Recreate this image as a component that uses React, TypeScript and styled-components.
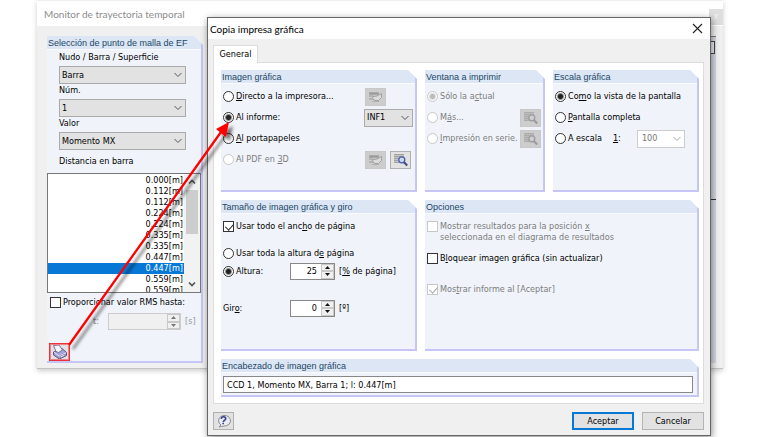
import React from "react";
import styled, { createGlobalStyle, css } from "styled-components";

const Global = createGlobalStyle`
  * { box-sizing: border-box; }
  body { margin: 0; background: #fff; overflow: hidden; }
  body, input, button, select { font: 9px/11px "DejaVu Sans Condensed", "DejaVu Sans", sans-serif; color: #000; }
  button, input, select { margin: 0; padding: 0; }
  u { text-underline-offset: 1px; }
`;

/* ---------- shells ---------- */
const Desktop = styled.main`
  position: relative;
  min-height: 100vh;
  padding: 0 37px;
`;
const MonitorWindow = styled.section`
  background: #f0f0f0;
  border-top: 1px solid #f0f0f0;
  border-bottom: 1px solid #c4c4c4;
  box-shadow: 0 2px 5px rgba(0, 0, 0, 0.2);
`;
const MonitorTitle = styled.header`
  display: flex;
  justify-content: space-between;
  align-items: center;
  height: 25px;
  padding-left: 7px;
  background: #fff;
  color: #8c8c8c;
  font: 10px/16px Lato, sans-serif;
`;
const MonitorClose = styled.button`
  width: 14px;
  height: 16px;
  margin-top: 6px;
  border: 0;
  background: #dedede;
  color: #f4f4f4;
`;
const MonitorBody = styled.div`
  display: flex;
  gap: 8px;
  padding: 10px 7px 5px 10px;
`;
const PlotArea = styled.div`
  flex: 1;
  display: flex;
  flex-direction: column;
  align-items: flex-end;
  background: #d5dae2;
  border-top: 1px solid #777;
`;
const PlotBox = styled.div`
  width: 60px;
  height: 13px;
  margin: 4px 1px 0 0;
  border: 1px solid #444;
  background: #e8ebf0;
`;
const PlotAxis = styled.div`
  width: 100%;
  margin-top: 145px;
  border-top: 1px solid #333;
`;
const Dialog = styled.section`
  position: absolute;
  top: 17px;
  left: 207px;
  right: 49px;
  background: #f0f0f0;
  border: 1px solid #666;
  box-shadow: 1px 2px 7px rgba(0, 0, 0, 0.45);
`;
const DialogTitle = styled.header`
  display: flex;
  justify-content: space-between;
  align-items: center;
  height: 21px;
  padding: 0 7px 0 2px;
  background: #fff;
`;
const DialogName = styled.h1`
  margin: 0;
  font: 10px/18px Lato, sans-serif;
`;
const CloseButton = styled.button`
  width: 11px;
  height: 11px;
  border: 0;
  background: none;
  svg { display: block; }
`;
const DialogBody = styled.div`
  padding: 6px 6px 5px 5px;
`;
const Tab = styled.button`
  display: block;
  position: relative;
  height: 18px;
  width: 45px;
  margin-bottom: -1px;
  background: #fff;
  border: 1px solid #dcdcdc;
  border-bottom: 0;
`;
const TabPanel = styled.div`
  display: grid;
  grid-template-columns: 196fr 120fr 146fr;
  gap: 8px;
  padding: 7px 4px 6px 7px;
  background: #fff;
  border: 1px solid #dcdcdc;
`;
const Footer = styled.footer`
  display: flex;
  align-items: center;
  gap: 8px;
  padding-top: 8px;
`;

/* ---------- groups ---------- */
const GroupBox = styled.section<{ $span?: number; $height?: number }>`
  grid-column: span ${(p) => p.$span ?? 1};
  min-width: 0;
  min-height: ${(p) => p.$height ?? 0}px;
  background: #f0f4fa;
  border: solid #c5c5f6;
  border-width: 0 2px 2px 0;
  clip-path: polygon(0 0, calc(100% - 9px) 0, 100% 9px, 100% 100%, 0 100%);
`;
const GroupTitle = styled.h2`
  margin: 0;
  height: 14px;
  padding-left: 1px;
  background: #dce6f5;
  border-bottom: 1px solid #f8faff;
  color: #1c4666;
  font: 9px/14px "Liberation Sans", sans-serif;
  white-space: nowrap;
`;
const GroupBody = styled.div`
  padding: 2px 2px 0;
`;
const Row = styled.div<{ $h?: number; $top?: number; $left?: number }>`
  display: flex;
  align-items: center;
  height: ${(p) => p.$h ?? 21}px;
  margin-top: ${(p) => p.$top ?? 0}px;
  padding-left: ${(p) => p.$left ?? 0}px;
`;
const Actions = styled.div`
  display: flex;
  gap: 4px;
  margin-left: auto;
`;
const ImageActions = styled(Actions)`
  width: 49px;
  padding-left: 1px;
`;

/* ---------- controls ---------- */
const Choice = styled.label<{ $off?: boolean }>`
  display: flex;
  align-items: flex-start;
  gap: 2px;
  color: ${(p) => (p.$off ? "#7c7c7c" : "#000")};
  white-space: nowrap;
`;
const mark = css`
  appearance: none;
  flex: none;
  width: 11px;
  height: 11px;
  border: 1px solid #333;
  background: #fff;
  &:disabled { border-color: #c8c8c8; }
`;
const Radio = styled.input.attrs({ type: "radio" })`
  ${mark}
  border-radius: 50%;
  &:checked { background: radial-gradient(circle, #222 0 2px, #fff 4px); }
  &:checked:disabled { background: radial-gradient(circle, #bbb 0 2px, #fff 4px); }
`;
const Check = styled.input.attrs({ type: "checkbox" })`
  ${mark}
  &:checked::before {
    content: "";
    display: block;
    width: 4px;
    height: 7px;
    margin: 0 0 0 3px;
    border: solid #333;
    border-width: 0 1px 1px 0;
    transform: rotate(42deg);
  }
  &:checked:disabled::before { border-color: #aaa; }
`;
const FieldLabel = styled.label<{ $w?: number; $off?: boolean }>`
  width: ${(p) => (p.$w ? p.$w + "px" : "auto")};
  color: ${(p) => (p.$off ? "#858585" : "#000")};
`;
const SelectWrap = styled.span<{ $w?: number }>`
  display: grid;
  align-items: center;
  width: ${(p) => (p.$w ? p.$w + "px" : "100%")};
  & > * { grid-area: 1 / 1; }
  & > svg { justify-self: end; margin-right: 4px; pointer-events: none; }
`;
const Select = styled.select`
  appearance: none;
  width: 100%;
  height: 18px;
  padding-left: 2px;
  border: 1px solid #aaa;
  border-radius: 0;
  background: #e2e2e2;
  &:disabled { background: #fff; color: #777; border-color: #ccc; opacity: 1; padding-left: 4px; }
`;
const SpinBox = styled.span<{ $w?: number; $off?: boolean }>`
  display: flex;
  width: ${(p) => p.$w ?? 45}px;
  height: 17px;
  border: 1px solid ${(p) => (p.$off ? "#ccc" : "#888")};
  background: ${(p) => (p.$off ? "#f0f0f0" : "#fff")};
  input { flex: 1; min-width: 0; border: 0; background: none; text-align: right; padding-right: 4px; }
`;
const SpinButtons = styled.span`
  display: flex;
  flex-direction: column;
  width: 13px;
  button { display: flex; flex: 1; align-items: center; justify-content: center; border: 1px solid #c8c8c8; background: #f0f0f0; }
`;
const Unit = styled.span<{ $off?: boolean }>`
  padding-left: 4px;
  color: ${(p) => (p.$off ? "#999" : "#000")};
`;
const IconButton = styled.button<{ $dim?: boolean }>`
  display: flex;
  align-items: center;
  justify-content: center;
  flex: none;
  width: 21px;
  height: 18px;
  border: 1px solid ${(p) => (p.$dim ? "#c8c8c8" : "#b0b0b0")};
  background: ${(p) => (p.$dim ? "#cdcdcd" : "#e2e2e2")};
`;
const PrintButton = styled(IconButton)`
  border: 1px solid #ee3038;
  outline: 1px solid #f08088;
  outline-offset: -2px;
  margin-top: 17px;
`;
const PushButton = styled.button<{ $main?: boolean }>`
  width: 62px;
  height: 18px;
  border: ${(p) => (p.$main ? "2px solid #0878d7" : "1px solid #b4b4b4")};
  background: #e2e2e2;
`;
const HelpButton = styled(IconButton)`
  margin-right: auto;
`;
const TextField = styled.input`
  display: block;
  width: 100%;
  height: 17px;
  padding-left: 3px;
  border: 1px solid #888;
  background: #fff;
`;
const Wide = styled.div`
  padding: 1px 2px 2px 0;
`;

/* ---------- monitor side panel ---------- */
const SideGroup = styled(GroupBox)`
  width: 156px;
  flex: none;
`;
const SideFields = styled.div`
  display: grid;
  width: 139px;
  padding: 1px 0 0 12px;
`;
const SideLabel = styled.label`
  height: 15px;
  line-height: 13px;
  white-space: nowrap;
`;
const ListFrame = styled.div`
  display: flex;
  height: 120px;
  border: 1px solid #777;
  background: #fff;
`;
const List = styled.ul`
  flex: 1;
  margin: 0;
  padding: 1px 0 0;
  list-style: none;
  overflow: hidden;
`;
const Item = styled.li<{ $on?: boolean }>`
  height: 11px;
  padding-right: 1px;
  text-align: right;
  color: ${(p) => (p.$on ? "#fff" : "#000")};
  background: ${(p) => (p.$on ? "#0878d7" : "none")};
`;
const Scroll = styled.div`
  display: flex;
  flex-direction: column;
  align-items: center;
  width: 16px;
  padding: 5px 0;
  background: #f2f2f2;
`;
const Thumb = styled.div`
  width: 12px;
  height: 44px;
  margin: 5px 0 auto;
  background: #cdcdcd;
`;

const Overlay = styled.svg`
  position: absolute;
  top: 0;
  left: 0;
  pointer-events: none;
`;

/* ---------- drawings ---------- */
const Chevron = ({ up, strong, off }: { up?: boolean; strong?: boolean; off?: boolean }) => (
  <svg width="8" height="6" viewBox="0 0 8 6" fill="none" stroke={off ? "#aaa" : "#555"} strokeWidth={strong ? 1.7 : 1}>
    <path d={up ? "M1 4.5 4 1.5 7 4.5" : strong ? "M1 1.5 4 4.5 7 1.5" : "M.5 1 4 4.5 7.5 1"} />
  </svg>
);
const Triangle = ({ down, off }: { down?: boolean; off?: boolean }) => (
  <svg width="5" height="3" viewBox="0 0 5 3"><path fill={off ? "#777" : "#111"} d={down ? "M0 0h5L2.5 3z" : "M0 3h5L2.5 0z"} /></svg>
);
const SetupIcon = () => (
  <svg width="15" height="12" viewBox="0 0 15 12">
    <path d="M1 1h10v3H1z" fill="#aaa" /><path d="M2 2.5h8M1 5h4M1 8h4" stroke="#999" />
    <path d="M5 5.5 9 5l4.5-2.5v4l-3 3H7L4.5 7.5z" fill="#dcdcdc" stroke="#a0a0a0" /><path d="M4 10.5h7" stroke="#b0b0b0" />
  </svg>
);
const PreviewIcon = ({ off }: { off?: boolean }) => (
  <svg width="16" height="14" viewBox="0 0 16 14">
    <path d="M1 1h10v9H1z" fill={off ? "#bbb" : "#c5c5c9"} />
    <path d="M1 1.5h10M1 3.5h10M1 5.5h5M1 7.5h4M1 9.5h5" stroke={off ? "#a8a8a8" : "#999"} strokeWidth=".8" />
    <circle cx="8.8" cy="6.8" r="3" fill={off ? "#cfcfcf" : "#c9daf5"} stroke={off ? "#9c9c9c" : "#4a5da3"} strokeWidth="1.3" />
    <path d="M10.8 9 14.2 12.5" stroke={off ? "#9c9c9c" : "#44508e"} strokeWidth="2.2" />
  </svg>
);
const PrinterIcon = () => (
  <svg width="17" height="16" viewBox="0 0 17 16" strokeLinejoin="round">
    <path d="M2.5 8 11 4.5l4.5 4v3L8.5 15l-6-4z" fill="#a4a2d6" stroke="#4a4770" strokeWidth=".9" />
    <path d="M5 7.5 2.5 1.5 8 1l3.5 5L7.5 8.5z" fill="#f4f5ff" stroke="#6a6894" strokeWidth=".9" />
    <path d="M3 8.2 8.3 12l6.7-3.2" fill="none" stroke="#dddcf5" /><path d="M9 12.5l4-2 1.5.8-5 2.7z" fill="#fff" stroke="#666390" strokeWidth=".6" />
  </svg>
);
const HelpIcon = () => (
  <svg width="15" height="14" viewBox="0 0 15 14" fill="none">
    <path d="M3 13l2-2A6 5.3 0 1 1 8 12c-2 0-3 1-5 1z" fill="#e9ebf6" stroke="#8c8c8c" />
    <path d="M5.3 4.8C5.6 1.9 10 2.2 9.7 4.8 9.4 6.2 7.5 6.2 7.3 8" stroke="#35408a" strokeWidth="1.6" /><path d="M6.4 8.8H8v1.5H6.4z" fill="#35408a" />
  </svg>
);

/* ---------- composites ---------- */
const Group = ({ title, span, height, children }: { title: string; span?: number; height?: number; children: React.ReactNode }) => (
  <GroupBox $span={span} $height={height}>
    <GroupTitle>{title}</GroupTitle>
    <GroupBody>{children}</GroupBody>
  </GroupBox>
);
const Option = ({ name, on, off, children }: { name: string; on?: boolean; off?: boolean; children: React.ReactNode }) => (
  <Choice $off={off}><Radio name={name} defaultChecked={on} disabled={off} /><span>{children}</span></Choice>
);
const Tick = ({ on, off, children }: { on?: boolean; off?: boolean; children: React.ReactNode }) => (
  <Choice $off={off}><Check defaultChecked={on} disabled={off} /><span>{children}</span></Choice>
);
const Combo = ({ id, label, value, w, off }: { id?: string; label?: string; value: string; w?: number; off?: boolean }) => (
  <SelectWrap $w={w}>
    <Select id={id} aria-label={label} disabled={off}><option>{value}</option></Select>
    <Chevron off={off} />
  </SelectWrap>
);
const Spin = ({ id, value, w, off, label }: { id: string; value: string; w?: number; off?: boolean; label?: string }) => (
  <SpinBox $w={w} $off={off}>
    <input id={id} aria-label={label} defaultValue={value} disabled={off} />
    <SpinButtons>
      <button aria-label="Aumentar" disabled={off}><Triangle off={off} /></button>
      <button aria-label="Disminuir" disabled={off}><Triangle down off={off} /></button>
    </SpinButtons>
  </SpinBox>
);

const distances = ["0.000", "0.112", "0.112", "0.224", "0.224", "0.335", "0.335", "0.447", "0.447", "0.559", "0.559"];
const sideFields = [
  { id: "object", label: "Nudo / Barra / Superficie", value: "Barra" },
  { id: "number", label: "Núm.", value: "1" },
  { id: "value", label: "Valor", value: "Momento MX" },
];

export default function App() {
  return (
    <>
      <Global />
      <Desktop>
        <MonitorWindow>
          <MonitorTitle>Monitor de trayectoria temporal<MonitorClose aria-label="Cerrar monitor">x</MonitorClose></MonitorTitle>
          <MonitorBody>
            <SideGroup $height={327}>
              <GroupTitle>Selección de punto de malla de EF</GroupTitle>
              <SideFields>
                {sideFields.map((f) => (
                  <React.Fragment key={f.id}>
                    <SideLabel htmlFor={f.id}>{f.label}</SideLabel>
                    <Combo id={f.id} value={f.value} />
                  </React.Fragment>
                ))}
              </SideFields>
              <Row $h={23} $left={12}>Distancia en barra</Row>
              <ListFrame>
                <List role="listbox" aria-label="Distancia en barra">
                  {distances.map((d, i) => (
                    <Item key={i} role="option" aria-selected={i === 8} $on={i === 8}>{d}[m]</Item>
                  ))}
                </List>
                <Scroll><Chevron up strong /><Thumb /><Chevron strong /></Scroll>
              </ListFrame>
              <Row $h={19} $left={3}><Tick>Proporcionar valor RMS hasta:</Tick></Row>
              <Row $h={19} $left={46}>
                <FieldLabel $off $w={15} htmlFor="time">t:</FieldLabel>
                <Spin id="time" value="" w={73} off />
                <Unit $off>[s]</Unit>
              </Row>
              <Row $h={24} $left={2}><PrintButton aria-label="Imprimir"><PrinterIcon /></PrintButton></Row>
            </SideGroup>
            <PlotArea><PlotBox /><PlotAxis /></PlotArea>
          </MonitorBody>
        </MonitorWindow>

        <Dialog role="dialog" aria-labelledby="dialog-name">
          <DialogTitle>
            <DialogName id="dialog-name">Copia impresa gráfica</DialogName>
            <CloseButton aria-label="Cerrar">
              <svg width="11" height="11" viewBox="0 0 11 11" stroke="#222" strokeWidth="1.1"><path d="M1 1l9 9M10 1l-9 9" /></svg>
            </CloseButton>
          </DialogTitle>
          <DialogBody>
            <Tab>General</Tab>
            <TabPanel>
              <Group title="Imagen gráfica" height={122}>
                <Row>
                  <Option name="target"><u>D</u>irecto a la impresora...</Option>
                  <ImageActions><IconButton $dim aria-label="Configurar impresora"><SetupIcon /></IconButton></ImageActions>
                </Row>
                <Row>
                  <Option name="target" on>Al informe:</Option>
                  <Actions><Combo label="Informe" value="INF1" w={49} /></Actions>
                </Row>
                <Row><Option name="target"><u>A</u>l portapapeles</Option></Row>
                <Row>
                  <Option name="target" off>Al PDF en <u>3</u>D</Option>
                  <ImageActions>
                    <IconButton $dim aria-label="Configurar PDF"><SetupIcon /></IconButton>
                    <IconButton aria-label="Vista previa"><PreviewIcon /></IconButton>
                  </ImageActions>
                </Row>
              </Group>
              <Group title="Ventana a imprimir">
                <Row><Option name="window" on off>Sólo la a<u>c</u>tual</Option></Row>
                <Row>
                  <Option name="window" off>M<u>á</u>s...</Option>
                  <Actions><IconButton $dim aria-label="Seleccionar ventanas"><PreviewIcon off /></IconButton></Actions>
                </Row>
                <Row>
                  <Option name="window" off><u>I</u>mpresión en serie.</Option>
                  <Actions><IconButton $dim aria-label="Configurar serie"><PreviewIcon off /></IconButton></Actions>
                </Row>
              </Group>
              <Group title="Escala gráfica">
                <Row><Option name="scale" on>Co<u>m</u>o la vista de la pantalla</Option></Row>
                <Row><Option name="scale"><u>P</u>antalla completa</Option></Row>
                <Row>
                  <Option name="scale">A escala</Option>
                  <Row $left={11}><FieldLabel $w={24} htmlFor="ratio"><u>1</u>:</FieldLabel></Row>
                  <Combo id="ratio" value="100" w={48} off />
                </Row>
              </Group>
              <Group title="Tamaño de imagen gráfica y giro" height={151}>
                <Row><Tick on>Usar todo el anc<u>h</u>o de página</Tick></Row>
                <Row $h={18} $top={7}><Option name="size">Usar toda la altura d<u>e</u> página</Option></Row>
                <Row $h={18}>
                  <FieldLabel as="div" $w={67}><Option name="size" on>Altura:</Option></FieldLabel>
                  <Spin id="height" label="Altura" value="25" />
                  <Unit>[<u>%</u> de página]</Unit>
                </Row>
                <Row $h={18} $top={19}>
                  <FieldLabel $w={67} htmlFor="rotation">Gir<u>o</u>:</FieldLabel>
                  <Spin id="rotation" value="0" />
                  <Unit>[º]</Unit>
                </Row>
              </Group>
              <Group title="Opciones" span={2}>
                <Row $h={32}><Tick off>Mostrar resultados para la posición <u>x</u><br />seleccionada en el diagrama de resultados</Tick></Row>
                <Row><Tick>B<u>l</u>oquear imagen gráfica (sin actualizar)</Tick></Row>
                <Row $top={10}><Tick on off>Mos<u>t</u>rar informe al [Aceptar]</Tick></Row>
              </Group>
              <Group title="Encabezado de imagen gráfica" span={3}>
                <Wide><TextField aria-label="Encabezado de imagen gráfica" defaultValue="CCD 1, Momento MX, Barra 1; l: 0.447[m]" /></Wide>
              </Group>
            </TabPanel>
            <Footer>
              <HelpButton aria-label="Ayuda"><HelpIcon /></HelpButton>
              <PushButton $main>Aceptar</PushButton>
              <PushButton>Cancelar</PushButton>
            </Footer>
          </DialogBody>
        </Dialog>

        <Overlay width="260" height="370" viewBox="0 0 260 370" aria-hidden="true">
          <defs>
            <filter id="arrow-shadow" x="-10%" y="-10%" width="130%" height="130%">
              <feDropShadow dx="4" dy="4" stdDeviation="1.5" floodColor="#000" floodOpacity=".5" />
            </filter>
          </defs>
          <g filter="url(#arrow-shadow)">
            <path d="M69 345 221 132" stroke="#f00" strokeWidth="2.3" />
            <path d="M229 122 216 129 226 137z" fill="#f00" />
          </g>
        </Overlay>
      </Desktop>
    </>
  );
}
